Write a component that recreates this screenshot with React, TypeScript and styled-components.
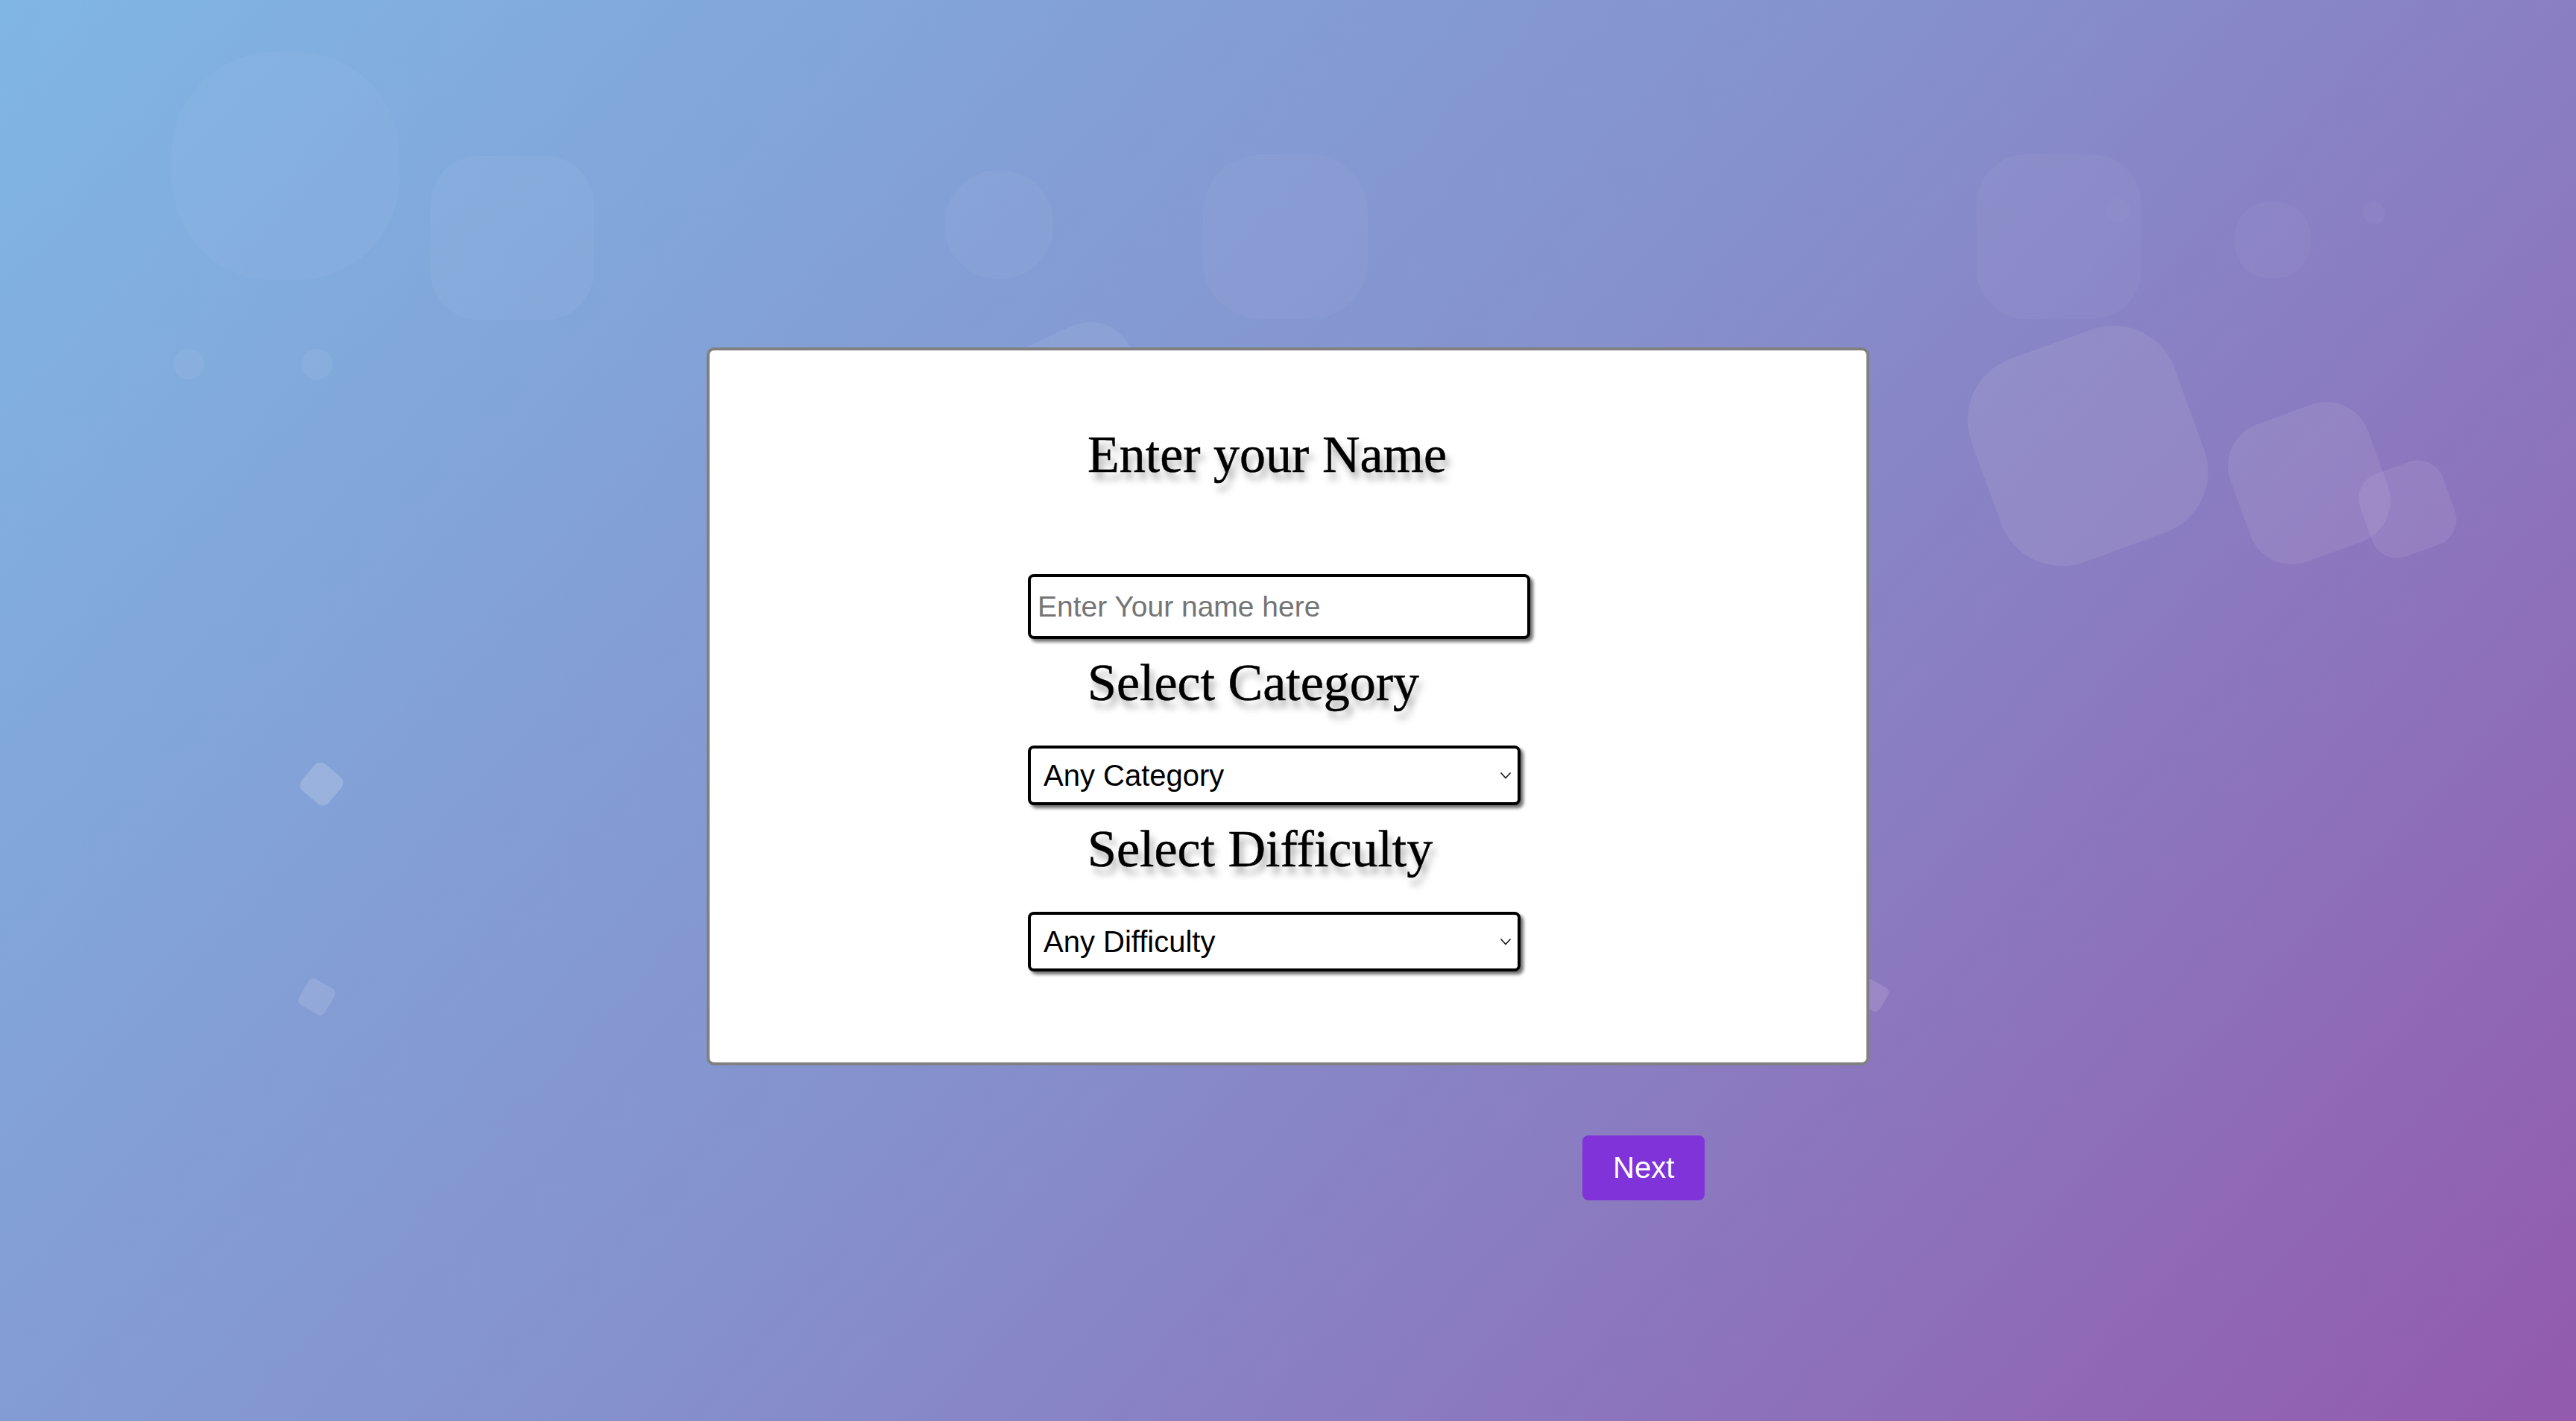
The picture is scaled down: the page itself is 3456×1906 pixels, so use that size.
import React from "react";
import styled, { createGlobalStyle } from "styled-components";

const GlobalStyle = createGlobalStyle`
  html, body {
    margin: 0;
    padding: 0;
  }
  body {
    font-family: "Liberation Sans", Arial, sans-serif;
  }
  * {
    box-sizing: border-box;
  }
`;

const Page = styled.div`
  position: relative;
  min-height: 100vh;
  overflow: hidden;
  background: linear-gradient(133deg, #80b6e3 0%, #8590cc 50%, #935aad 100%);
`;

const Backdrop = styled.div`
  position: absolute;
  inset: 0;
  pointer-events: none;
`;

type ShapeProps = {
  $cx: number;
  $cy: number;
  $size: number;
  $radius: string;
  $rotate: number;
  $alpha: number;
};

const Shape = styled.span<ShapeProps>`
  position: absolute;
  display: block;
  left: ${(p) => p.$cx - p.$size / 2}px;
  top: ${(p) => p.$cy - p.$size / 2}px;
  width: ${(p) => p.$size}px;
  height: ${(p) => p.$size}px;
  border-radius: ${(p) => p.$radius};
  transform: rotate(${(p) => p.$rotate}deg);
  background: rgba(255, 255, 255, ${(p) => p.$alpha});
`;

const Content = styled.main`
  position: relative;
  z-index: 1;
  display: flex;
  flex-direction: column;
  align-items: center;
  padding-top: 466px;
`;

const Card = styled.section`
  width: 1560px;
  background: #ffffff;
  border: 4px solid #808080;
  border-radius: 10px;
  padding: 100px 0 122px 427px;
`;

const Form = styled.form`
  display: flex;
  flex-direction: column;
  align-items: flex-start;
  width: 680px;
`;

const Heading = styled.h2<{ $first?: boolean }>`
  margin: ${(p) => (p.$first ? "0 0 120px 0" : "19px 0 44px 0")};
  padding-left: 80px;
  font-family: "Liberation Serif", "Times New Roman", serif;
  font-weight: 400;
  font-size: 70px;
  line-height: 80px;
  color: #000000;
  -webkit-text-stroke: 0.5px #000000;
  text-shadow: 5px 10px 10px rgba(0, 0, 0, 0.34);
  white-space: nowrap;
`;

const NameInput = styled.input`
  width: 674px;
  height: 87px;
  margin: 0;
  padding: 0 0 0 9px;
  border: 4px solid #000000;
  border-radius: 8px;
  background: #ffffff;
  box-shadow: 4px 4px 4px #6e6e6e;
  font-family: "Liberation Sans", Arial, sans-serif;
  font-size: 39px;
  color: #000000;
  outline: none;

  &::placeholder {
    color: #757575;
    opacity: 1;
  }
`;

const SelectWrap = styled.div`
  position: relative;
  width: 661px;
  height: 80px;
`;

const Select = styled.select`
  appearance: none;
  -webkit-appearance: none;
  width: 100%;
  height: 100%;
  margin: 0;
  padding: 0 40px 0 17px;
  border: 4px solid #000000;
  border-radius: 8px;
  background: #ffffff;
  box-shadow: 4px 4px 4px #6e6e6e;
  font-family: "Liberation Sans", Arial, sans-serif;
  font-size: 40px;
  color: #000000;
  outline: none;
`;

const Chevron = styled.svg`
  position: absolute;
  right: 12px;
  top: 35px;
  width: 16px;
  height: 10px;
  pointer-events: none;
`;

const ButtonRow = styled.div`
  width: 1560px;
  display: flex;
  justify-content: flex-start;
  padding-left: 1175px;
  margin-top: 94px;
`;

const NextButton = styled.button`
  height: 87px;
  padding: 0 41px;
  border: none;
  border-radius: 8px;
  background: #7f33d9;
  color: #ffffff;
  font-family: "Liberation Sans", Arial, sans-serif;
  font-size: 40px;
  cursor: pointer;
`;

const shapes = [
  { cx: 383, cy: 223, size: 306, radius: "45%", rotate: 0, alpha: 0.035 },
  { cx: 687, cy: 319, size: 220, radius: "30%", rotate: 0, alpha: 0.035 },
  { cx: 253, cy: 488, size: 41, radius: "50%", rotate: 0, alpha: 0.06 },
  { cx: 425, cy: 488, size: 41, radius: "50%", rotate: 0, alpha: 0.06 },
  { cx: 431, cy: 1051, size: 47, radius: "22%", rotate: 40, alpha: 0.18 },
  { cx: 425, cy: 1337, size: 40, radius: "18%", rotate: 30, alpha: 0.12 },
  { cx: 1340, cy: 301, size: 145, radius: "48%", rotate: 0, alpha: 0.035 },
  { cx: 1724, cy: 317, size: 221, radius: "35%", rotate: 0, alpha: 0.035 },
  { cx: 1443, cy: 545, size: 200, radius: "30%", rotate: -25, alpha: 0.07 },
  { cx: 2762, cy: 317, size: 221, radius: "30%", rotate: 0, alpha: 0.035 },
  { cx: 3049, cy: 322, size: 102, radius: "45%", rotate: 0, alpha: 0.035 },
  { cx: 3185, cy: 286, size: 30, radius: "50%", rotate: 0, alpha: 0.035 },
  { cx: 2842, cy: 282, size: 32, radius: "50%", rotate: 0, alpha: 0.02 },
  { cx: 2801, cy: 598, size: 290, radius: "30%", rotate: -20, alpha: 0.08 },
  { cx: 3098, cy: 648, size: 196, radius: "30%", rotate: -20, alpha: 0.08 },
  { cx: 3230, cy: 683, size: 118, radius: "30%", rotate: -20, alpha: 0.08 },
  { cx: 2512, cy: 1335, size: 36, radius: "20%", rotate: 30, alpha: 0.12 },
];

const ChevronIcon = () => (
  <Chevron viewBox="0 0 16 10" fill="none">
    <path d="M1.5 1.5 L8 8.5 L14.5 1.5" stroke="#222" strokeWidth="1.8" />
  </Chevron>
);

export default function App() {
  return (
    <>
      <GlobalStyle />
      <Page>
        <Backdrop>
          {shapes.map((s, i) => (
            <Shape
              key={i}
              $cx={s.cx}
              $cy={s.cy}
              $size={s.size}
              $radius={s.radius}
              $rotate={s.rotate}
              $alpha={s.alpha}
            />
          ))}
        </Backdrop>
        <Content>
          <Card>
            <Form onSubmit={(e) => e.preventDefault()}>
              <Heading $first>Enter your Name</Heading>
              <NameInput type="text" placeholder="Enter Your name here" />
              <Heading>Select Category</Heading>
              <SelectWrap>
                <Select defaultValue="any">
                  <option value="any">Any Category</option>
                  <option value="9">General Knowledge</option>
                  <option value="10">Entertainment: Books</option>
                  <option value="11">Entertainment: Film</option>
                  <option value="17">Science &amp; Nature</option>
                  <option value="21">Sports</option>
                  <option value="23">History</option>
                </Select>
                <ChevronIcon />
              </SelectWrap>
              <Heading>Select Difficulty</Heading>
              <SelectWrap>
                <Select defaultValue="any">
                  <option value="any">Any Difficulty</option>
                  <option value="easy">Easy</option>
                  <option value="medium">Medium</option>
                  <option value="hard">Hard</option>
                </Select>
                <ChevronIcon />
              </SelectWrap>
            </Form>
          </Card>
          <ButtonRow>
            <NextButton type="button">Next</NextButton>
          </ButtonRow>
        </Content>
      </Page>
    </>
  );
}
